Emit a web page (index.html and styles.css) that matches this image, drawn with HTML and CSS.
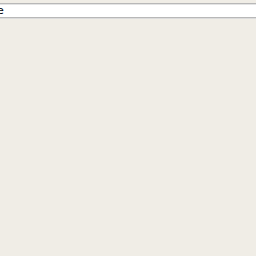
FILE: index.html
```html
<!DOCTYPE html>
<html lang="en">
<head>
    <meta charset="UTF-8">
    <title>Search</title>
    <link rel="stylesheet" href="styles.css">
</head>
<body>
    <div class="search-bar">
        <div class="search-field"><span class="search-text">e</span></div>
    </div>
</body>
</html>
```
FILE: styles.css
```css
body {
    margin: 0;
    background-color: #f0ede6;
    font-family: 'DejaVu Sans', sans-serif;
    height: 256px;
    overflow: hidden;
}
.search-bar {
    padding-top: 3px;
}
.search-field {
    height: 13px;
    background-color: #ffffff;
    border-top: 1px solid #b8b8b8;
    border-bottom: 1px solid #b8b8b8;
    box-shadow: inset 0 1px 0 #e4e4e4, 0 1px 0 #dcdcdc;
    overflow: hidden;
    font-size: 11px;
    line-height: 13px;
    color: #000;
}
.search-text {
    display: inline-block;
    margin-left: -3px;
}
```
